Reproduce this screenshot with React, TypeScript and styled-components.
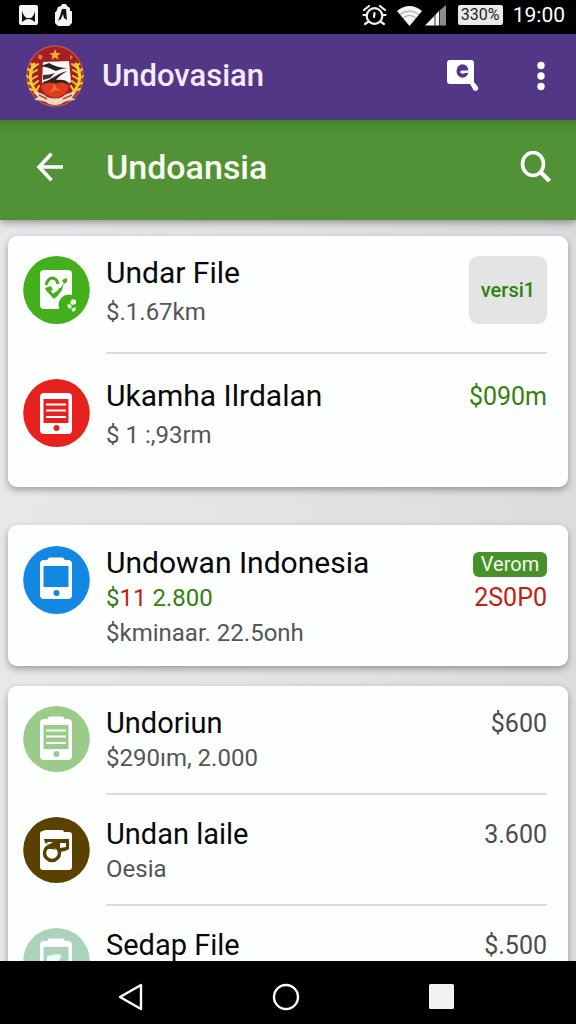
import React from "react";
import styled, { createGlobalStyle } from "styled-components";

const GlobalStyle = createGlobalStyle`
  * { box-sizing: border-box; }
  body { margin: 0; background: #000; font-family: Roboto, "Liberation Sans", sans-serif; }
  button { border: 0; padding: 0; background: none; font: inherit; color: inherit; cursor: pointer; }
  h1, h2, h3, p, ul { margin: 0; padding: 0; font-weight: 400; }
  ul { list-style: none; }
  svg { display: block; }
`;

const Screen = styled.div`
  display: flex;
  flex-direction: column;
  height: 100vh;
  overflow: hidden;
  background: #e3e4e5;
`;

const StatusBar = styled.div`
  display: flex;
  flex: none;
  align-items: center;
  justify-content: space-between;
  height: 34px;
  padding: 0 11px 4px 19px;
  background: #000;
  color: #fff;
`;

const StatusGroup = styled.div<{ $gap: number }>`
  display: flex;
  align-items: center;
  gap: ${(p) => p.$gap}px;
`;

const Battery = styled.span`
  width: 45px;
  height: 20px;
  border-radius: 2px;
  background: #e9e9e9;
  color: #222;
  font-size: 16px;
  line-height: 20px;
  text-align: center;
`;

const Clock = styled.time`
  font-size: 21px;
  line-height: 24px;
`;

const AppBar = styled.header`
  display: flex;
  flex: none;
  align-items: center;
  height: 86px;
  padding: 0 15px 2px 26px;
  border-bottom: 1px solid #4a4f6a;
  background: #513786;
  color: #fff;
`;

const SubBar = styled.div`
  position: relative;
  display: flex;
  flex: none;
  align-items: center;
  height: 100px;
  padding: 0 16px 6px 26px;
  background: linear-gradient(#43812b, #529236 12px);
  box-shadow: 0 2px 8px rgba(40, 45, 60, 0.5);
  color: #fff;
`;

const AppTitle = styled.h1`
  flex: 1;
  margin-left: 18px;
  color: #f6e9ff;
  font-size: 31px;
  font-weight: 500;
  line-height: 40px;
`;

const PageTitle = styled.h2`
  flex: 1;
  margin-left: 32px;
  color: #f8fff0;
  font-size: 34px;
  font-weight: 500;
  line-height: 40px;
`;

const IconButton = styled.button`
  display: grid;
  place-items: center;
  width: 48px;
  height: 48px;
`;

const AppActions = styled.div`
  display: flex;
  gap: 30px;
  margin-right: -4px;
`;

const Content = styled.main`
  flex: 1;
  min-height: 0;
  padding: 16px 8px 0;
  overflow: hidden;
  background: linear-gradient(90deg, #e8e8ea, #e2e3e4 50%, #dadcdd);
`;

const Card = styled.ul<{ $after?: number }>`
  margin-bottom: ${(p) => p.$after ?? 0}px;
  border-radius: 9px;
  background: #fdfefe;
  box-shadow: 0 3px 7px rgba(0, 0, 0, 0.32);
`;

const Row = styled.li`
  display: flex;
  gap: 16px;
  padding: 0 21px 0 15px;
`;

const AvatarSlot = styled.div<{ $top: number }>`
  flex: none;
  padding-top: ${(p) => p.$top}px;
`;

const Body = styled.div<{ $top: number; $bottom: number; $divided?: boolean }>`
  display: flex;
  flex: 1;
  min-width: 0;
  justify-content: space-between;
  padding: ${(p) => p.$top}px 0 ${(p) => p.$bottom}px;
  border-bottom: ${(p) => (p.$divided ? "2px solid #dcdcde" : "0")};
`;

const Lines = styled.div<{ $gap: number }>`
  display: flex;
  flex-direction: column;
  gap: ${(p) => p.$gap}px;
  min-width: 0;
  white-space: nowrap;
`;

const Name = styled.h3<{ $compact?: boolean }>`
  color: #080808;
  font-size: ${(p) => (p.$compact ? 29 : 30)}px;
  line-height: 34px;
`;

const Detail = styled.p`
  color: #555;
  font-size: 24px;
  line-height: 34px;
`;

const Tint = styled.span<{ $tone: "green" | "red" }>`
  color: ${(p) => (p.$tone === "green" ? "#34800f" : "#c91c0c")};
`;

const Trailing = styled.div`
  display: flex;
  flex: none;
  flex-direction: column;
  align-items: flex-end;
`;

const Price = styled.span<{ $tone?: "green" | "red" }>`
  color: ${(p) => (p.$tone === "green" ? "#34800f" : p.$tone === "red" ? "#c91c0c" : "#4c4c4c")};
  font-size: 25px;
  line-height: 36px;
`;

const VersionButton = styled.button`
  width: 78px;
  height: 68px;
  border-radius: 9px;
  background: #e3e4e4;
  color: #34800f;
  font-size: 20px;
  font-weight: 500;
  line-height: 28px;
`;

const Badge = styled.span`
  width: 74px;
  height: 25px;
  margin: 6px 0 3px;
  border-radius: 6px;
  background: #47902a;
  color: #f4ffe8;
  font-size: 20px;
  line-height: 25px;
  text-align: center;
`;

const NavBar = styled.nav`
  display: grid;
  flex: none;
  grid-template-columns: repeat(3, 1fr);
  justify-items: center;
  align-items: center;
  height: 63px;
  padding: 0 57px 0 53px;
  background: #000;
  color: #fff;
  & > button { margin-top: 8px; }
`;

const Emblem = () => (
  <svg width="58" height="62" viewBox="0 0 58 62" aria-hidden="true">
    <ellipse cx="29" cy="31" rx="28" ry="30" fill="#a51f20" stroke="#c0504a" strokeWidth="1.5" />
    <path d="M29 4l1.6 4 4.2.2-3.3 2.6 1.2 4L29 12.5l-3.700 2.300 1.200-4-3.300-2.600 4.200-.2z" fill="#f0a83c" />
    <path d="M13 9l4 2-2 4-3-2zM44 10l3 2-3 3z" fill="#d97c3e" />
    <g fill="none" stroke="#f0cd32" strokeLinecap="round">
      <path d="M8 19Q-1 35 12 49" strokeWidth="3" />
      <path d="M8 22l-3-3M8 22l4-3M6 28l-4-4M6 28l5-3M5 34l-4-3M6 34l5-3M7 40l-5-2M7 40l5-4M10 46l-6-2M10 46l3-5" strokeWidth="2" />
      <path d="M50 19Q59 35 46 49" strokeWidth="3" />
      <path d="M50 22l3-3M50 22l-4-3M52 28l4-4M52 28l-5-3M53 34l4-3M52 34l-5-3M51 40l5-2M51 40l-5-4M48 46l6-2M48 46l-3-5" strokeWidth="2" />
    </g>
    <path d="M17 17l26-1 2 21-9 5H20l-4-5z" fill="#f9f6f3" />
    <path d="M15 21l8-3q8 5 19 5-8 1-12 3-8-4-15-5z" fill="#252329" />
    <path d="M17 37c7-1 13-8 24-11-6 4-9 6-11 9 6-1 10 0 13 3l-7 9H20z" fill="#352322" />
    <path d="M17 30q7 0 12-2l-5 5-7 2z" fill="#39343a" />
    <path d="M15 41q7-6 14-2 8-4 14 2-1 9-14 12-13-3-14-12z" fill="#df3b1f" />
    <path d="M28 37l2 6 5 3-6-1-6 3 4-5z" fill="#f37431" />
    <path d="M7 47q9 0 14 5 8 3 15 0 6-5 14-5l-4 6 4 2q-10 0-15 4-6 2-12 0-5-4-15-4l4-3z" fill="#eadac0" />
    <path d="M13 50l8 4m16 0l9-4" stroke="#b5492f" strokeWidth="1.500" />
  </svg>
);

type AvatarKind = "map" | "note" | "phone" | "clip" | "scribble" | "drop";

const discColour: Record<AvatarKind, string> = {
  map: "#43af1a",
  note: "#e7211d",
  phone: "#1288e2",
  clip: "#9acb88",
  scribble: "#5a4100",
  drop: "#abd3ba",
};

const Avatar = ({ kind, compact }: { kind: AvatarKind; compact?: boolean }) => {
  const c = discColour[kind];
  return (
    <svg width="67" height={compact ? 66 : 68} viewBox={compact ? "0 1 67 66" : "0 0 67 68"} aria-hidden="true">
      <ellipse cx="33.5" cy="34" rx="33.3" ry={compact ? 33 : 34} fill={c} />
      {kind === "map" && (
        <>
          <rect x="17" y="14" width="32" height="39" rx="4" fill="#fff" />
          <path d="M23 29q2-7 7-7 4 1 5 6M24 33l6 7q6-3 8-8" fill="none" stroke={c} strokeWidth="3" />
          <path d="M22 32l6-2 2 4-5 2zM28 39l3 4q8-6 10-16l-4 6z" fill={c} />
          <path d="M39 24l5-2v4l-3 2z" fill={c} />
          <circle cx="46" cy="49" r="10.500" fill={c} />
          <path d="M49 43l4 1v4l-4 1-2-2zM44 49l3-1 2 3-3 2zM48 53l4-2 1 3-3 2z" fill="#e8ffe0" />
        </>
      )}
      {kind !== "map" && kind !== "scribble" && (
        <>
          <rect x="17" y="14" width="32" height={kind === "phone" ? 39 : 41} rx="4" fill="#fff" />
          {kind !== "note" && <path d="M24 15l2-3h14l2 3z" fill="#fff" stroke="#fff" strokeWidth="1" />}
          <rect x="20.500" y="20" width="25" height={kind === "phone" ? 21 : 24} fill={c} />
          <circle cx="33.500" cy={kind === "phone" ? 47 : 49} r="3" fill={c} />
        </>
      )}
      {(kind === "note" || kind === "clip") && (
        <path d="M23 25.500h20M23 31.500h20M23 38h20" stroke="#fff" strokeWidth="2" />
      )}
      {kind === "drop" && <path d="M24 29l12-2q4 1 1 5l-6 7 9-1v3H24z" fill="#e9fff6" />}
      {kind === "scribble" && (
        <>
          <path d="M17 18q0-3 3-3l2-1h18l1 2h5q3 0 3 3v32q0 3-3 3H20q-3 0-3-3z" fill="#fff" />
          <path d="M21 23h25v10q-4 3-9 3l-3-5-12-4z" fill={c} />
          <path d="M24 26l6 0-5 3zM37 27h6v4l-6 1z" fill="#fff" />
          <circle cx="29" cy="37" r="7.500" fill="#fff" stroke={c} strokeWidth="3.500" />
          <path d="M24 33l5-4 4 5-4-1z" fill={c} />
        </>
      )}
    </svg>
  );
};

type ItemProps = {
  avatar: AvatarKind;
  name: string;
  details?: React.ReactNode[];
  trailing: React.ReactNode;
  gap?: number;
  top?: number;
  bottom?: number;
  divided?: boolean;
  compact?: boolean;
};

const Item = ({
  avatar,
  name,
  details = [],
  trailing,
  gap = 1,
  top = 20,
  bottom = 18,
  divided,
  compact,
}: ItemProps) => (
  <Row>
    <AvatarSlot $top={top}>
      <Avatar kind={avatar} compact={compact} />
    </AvatarSlot>
    <Body $top={top} $bottom={bottom} $divided={divided}>
      <Lines $gap={gap}>
        <Name $compact={compact}>{name}</Name>
        {details.map((d, i) => (
          <Detail key={i}>{d}</Detail>
        ))}
      </Lines>
      <Trailing>{trailing}</Trailing>
    </Body>
  </Row>
);

export default function App() {
  return (
    <>
      <GlobalStyle />
      <Screen>
        <StatusBar>
          <StatusGroup $gap={17}>
            <svg width="19" height="20" viewBox="0 0 19 20" aria-hidden="true">
              <rect width="19" height="20" rx="2" fill="#f5f5f5" />
              <path d="M3 17V6q2 6 5 7h4q3-2 4-7v11l-3-2q-4-2-7 0z" fill="#111" />
            </svg>
            <svg width="17" height="22" viewBox="0 0 17 22" aria-hidden="true">
              <path d="M3 3l3-1 1-2h4l1 2 3 2v3h2v12l-3 3H3l-3-3V8h1z" fill="#f5f5f5" />
              <path d="M7 5h4l1 11-3-2-1-4-2 5-3 2 2-5z" fill="#111" />
            </svg>
          </StatusGroup>
          <StatusGroup $gap={10}>
            <svg width="25" height="22" viewBox="0 0 25 22" fill="none" stroke="#f2f2f2" strokeWidth="2.200" strokeLinecap="round" aria-hidden="true">
              <circle cx="12.500" cy="12" r="7.800" />
              <path d="M2 6l5-4M23 6l-5-4M6 18l-3 2M19 18l3 2M1.500 11h2M21.500 11h2M12.500 9l-.5 4" />
            </svg>
            <svg width="51" height="21" viewBox="0 0 51 21" aria-hidden="true">
              <path d="M0 6Q12.500-4 25 6L12.500 21z" fill="#f4f4f4" />
              <path d="M3 9.500q9.500-7 19 0M6 13q6.500-5 13 0" fill="none" stroke="#999" strokeWidth="1" />
              <path d="M28 20.500L42 6v14.500z" fill="#f4f4f4" />
              <path d="M42 6l7-6v20.500h-7z" fill="#8c8c8c" />
              <path d="M38 9v11.500M42.500 5v15.500" stroke="#333" strokeWidth="1" />
            </svg>
            <Battery>330%</Battery>
            <Clock>19:00</Clock>
          </StatusGroup>
        </StatusBar>

        <AppBar>
          <Emblem />
          <AppTitle>Undovasian</AppTitle>
          <AppActions>
            <IconButton aria-label="Find in page">
              <svg width="32" height="33" viewBox="0 0 32 33" aria-hidden="true">
                <path d="M3 1h21q3 0 3 3v19l4 5q1 2-1 3.500-2 1-3.500-.5L23 25H3q-3 0-3-3V4q0-3 3-3z" fill="#fff" />
                <ellipse cx="15.500" cy="12" rx="6" ry="6.800" fill="#513786" />
                <path d="M13 13q0-1.500 2.500-1.500H22q0 3-4 2.500-3 2-5-1z" fill="#fff" />
              </svg>
            </IconButton>
            <IconButton aria-label="More options">
              <svg width="8" height="30" viewBox="0 0 8 30" fill="#fff" aria-hidden="true">
                <circle cx="4" cy="4.500" r="3.700" />
                <circle cx="4" cy="15" r="3.700" />
                <circle cx="4" cy="25.500" r="3.700" />
              </svg>
            </IconButton>
          </AppActions>
        </AppBar>

        <SubBar>
          <IconButton aria-label="Back">
            <svg width="28" height="30" viewBox="0 0 28 30" fill="none" stroke="#fff" strokeWidth="3.600" aria-hidden="true">
              <path d="M15.500 1.800L3 15l12.500 13.200M3.500 15H27" />
            </svg>
          </IconButton>
          <PageTitle>Undoansia</PageTitle>
          <IconButton aria-label="Search">
            <svg width="32" height="32" viewBox="0 0 32 32" fill="none" stroke="#fff" aria-hidden="true">
              <ellipse cx="13" cy="13" rx="10.500" ry="11.500" strokeWidth="3.600" />
              <path d="M20 20.500l9.500 9.500" strokeWidth="4.500" />
            </svg>
          </IconButton>
        </SubBar>

        <Content>
          <Card $after={38}>
            <Item
              avatar="map"
              name="Undar File"
              details={["$.1.67km"]}
              trailing={<VersionButton>versi1</VersionButton>}
              gap={5}
              bottom={23}
              divided
            />
            <Item
              avatar="note"
              name="Ukamha Ilrdalan"
              details={["$ 1 :,93rm"]}
              trailing={<Price $tone="green">$090m</Price>}
              gap={5}
              top={25}
              bottom={35}
            />
          </Card>
          <Card $after={20}>
            <Item
              avatar="phone"
              name="Undowan Indonesia"
              details={[
                <>
                  <Tint $tone="green">$</Tint>
                  <Tint $tone="red">11 </Tint>
                  <Tint $tone="green">2.800</Tint>
                </>,
                "$kminaar. 22.5onh",
              ]}
              trailing={
                <>
                  <Badge>Verom</Badge>
                  <Price $tone="red">2S0P0</Price>
                </>
              }
              top={21}
              bottom={16}
            />
          </Card>
          <Card>
            <Item avatar="clip" name="Undoriun" details={["$290ım, 2.000"]} trailing={<Price>$600</Price>} divided compact />
            <Item
              avatar="scribble"
              name="Undan laile"
              details={["Oesia"]}
              trailing={<Price>3.600</Price>}
              top={22}
              divided
              compact
            />
            <Item avatar="drop" name="Sedap File" trailing={<Price>$.500</Price>} top={22} bottom={53} compact />
          </Card>
        </Content>

        <NavBar aria-label="System">
          <IconButton aria-label="Back">
            <svg width="26" height="28" viewBox="0 0 26 28" aria-hidden="true">
              <path d="M23 2v24L2 14z" fill="none" stroke="#fff" strokeWidth="2.400" strokeLinejoin="round" />
            </svg>
          </IconButton>
          <IconButton aria-label="Home">
            <svg width="28" height="28" viewBox="0 0 28 28" aria-hidden="true">
              <circle cx="14" cy="14" r="12" fill="none" stroke="#fff" strokeWidth="2.400" />
            </svg>
          </IconButton>
          <IconButton aria-label="Recent apps">
            <svg width="25" height="25" viewBox="0 0 25 25" aria-hidden="true">
              <rect width="25" height="25" rx="1.500" fill="#f2f2f3" />
            </svg>
          </IconButton>
        </NavBar>
      </Screen>
    </>
  );
}
